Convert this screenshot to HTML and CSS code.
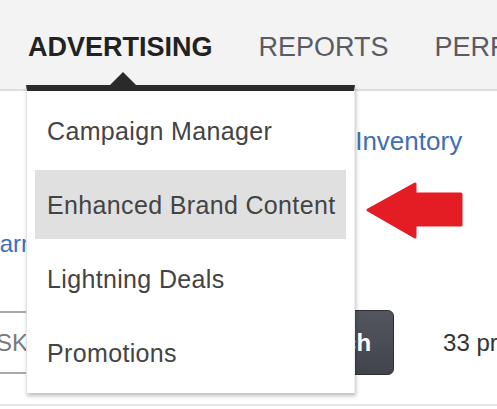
FILE: index.html
```html
<!DOCTYPE html>
<html lang="en">
<head>
<meta charset="UTF-8">
<meta name="viewport" content="width=device-width, initial-scale=1.0">
<title>Seller Central - Advertising</title>
<link rel="stylesheet" href="styles.css">
</head>
<body>
<div class="page">
  <ul class="topnav">
    <li class="nav-item active">ADVERTISING
      <div class="dropdown">
        <a class="menu-item" href="#">Campaign Manager</a>
        <a class="menu-item hover" href="#">Enhanced Brand Content</a>
        <a class="menu-item" href="#">Lightning Deals</a>
        <a class="menu-item" href="#">Promotions</a>
      </div>
    </li>
    <li class="nav-item">REPORTS</li>
    <li class="nav-item">PERFORMANCE</li>
  </ul>

  <div class="content">
    <div class="row row-links">
      <a href="#">Manage Inventory</a>
    </div>
    <div class="row row-learn">
      <a href="#">Learn more</a>
    </div>
    <div class="row row-search">
      <input class="search-input" type="text" placeholder="SKU or title">
      <button class="search-btn">Search</button>
      <span class="count">33 products</span>
    </div>
  </div>

  <!-- annotation -->
  <svg class="arrow" width="100" height="60" viewBox="0 0 100 60">
    <polygon points="3,29 50,3 50,13 96,13 96,44 50,44 50,56"
             fill="#e41d24" stroke="#e41d24" stroke-width="3" stroke-linejoin="round"/>
  </svg>
</div>
</body>
</html>
```

FILE: styles.css
```css
body {
  margin: 0;
  font-family: "Liberation Sans", Arial, sans-serif;
  background-color: #fff;
}

.page {
  position: relative;
  width: 497px;
  height: 409px;
  overflow: hidden;
}

.topnav {
  display: flex;
  gap: 46px;
  list-style: none;
  margin: 0;
  padding: 30px 0 0 28px;
  height: 59px;
  background-color: #f3f3f4;
  border-bottom: 2px solid #dedede;
  white-space: nowrap;
}

.nav-item {
  position: relative;
  font-size: 27px;
  line-height: 34px;
  color: #5a5b63;
}

.nav-item.active {
  font-weight: bold;
  color: #222;
  z-index: 2;
}

.dropdown {
  position: absolute;
  top: 55px;
  left: -2px;
  width: 327px;
  padding: 5px 0 6px;
  background-color: #fff;
  border-top: 6px solid #2a2a2a;
  border-left: 1px solid #e3e3e3;
  border-right: 1px solid #ececec;
  box-shadow: 1px 3px 4px rgba(0, 0, 0, 0.25);
  display: flex;
  flex-direction: column;
  gap: 5px;
}

.dropdown::before {
  content: "";
  position: absolute;
  top: -19px;
  left: 83px;
  border-left: 13px solid transparent;
  border-right: 13px solid transparent;
  border-bottom: 13px solid #2a2a2a;
}

.menu-item {
  display: flex;
  align-items: center;
  height: 69px;
  margin: 0 8px;
  padding-left: 12px;
  font-size: 25px;
  font-weight: normal;
  letter-spacing: 0.35px;
  color: #444;
  text-decoration: none;
}

.menu-item.hover {
  background-color: #e0e0e0;
}

.content {
  padding-bottom: 29px;
  border-bottom: 2px solid #e6e6e6;
}

.row {
  display: flex;
  align-items: center;
  white-space: nowrap;
}

.row a {
  color: #3f6fb6;
  text-decoration: none;
  font-size: 26px;
  line-height: 30px;
}

.row-links {
  margin-top: 35px;
  padding-left: 254px;
}

.row-learn {
  margin-top: 73px;
  margin-left: -27px;
}

.row-learn a {
  font-size: 24px;
}

.row-search {
  margin-top: 51px;
  margin-left: -40px;
  height: 65px;
}

.search-input {
  box-sizing: border-box;
  width: 312px;
  height: 63px;
  padding: 0 0 0 34px;
  border: 2px solid #a9a9a9;
  border-right: none;
  font-family: "Liberation Sans", Arial, sans-serif;
  font-size: 24px;
  outline: none;
}

.search-input::placeholder {
  color: #7a7a7a;
}

.search-btn {
  height: 65px;
  padding: 0 22px 0 18px;
  border: 1px solid #2e3036;
  border-radius: 0 6px 6px 0;
  background: linear-gradient(#53565e, #41444b);
  color: #fff;
  font-family: "Liberation Sans", Arial, sans-serif;
  font-size: 24px;
  font-weight: bold;
}

.count {
  margin-left: 49px;
  font-size: 24px;
  color: #333;
}

.arrow {
  position: absolute;
  left: 365px;
  top: 181px;
}
```
